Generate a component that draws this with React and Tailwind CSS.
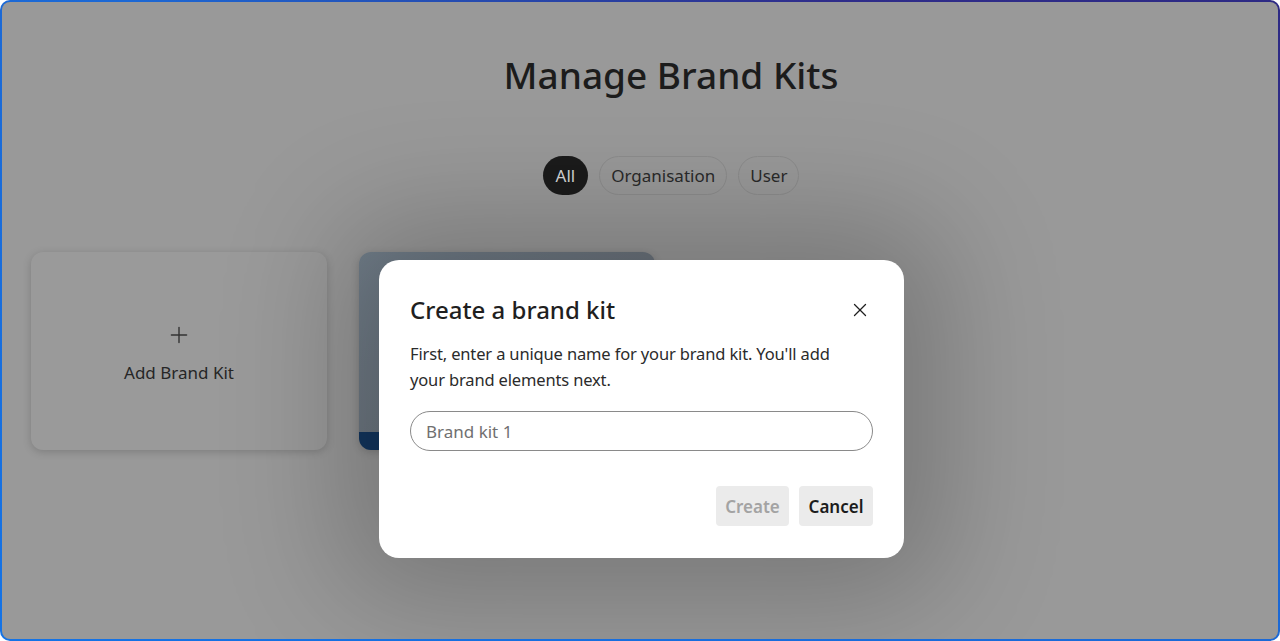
import { X, Plus } from 'lucide-react'

const font = { fontFamily: '"Segoe UI", "Noto Sans", "Open Sans", sans-serif' }

function Chip({ label, active }) {
  return (
    <button
      className={
        active
          ? 'h-[39px] px-[13px] rounded-full bg-[#1b1b1b] text-[#d6d6d6] text-[17px]'
          : 'h-[39px] px-[11px] rounded-full border border-[#8c8c8c] text-[#2a2a2a] text-[17px]'
      }
    >
      {label}
    </button>
  )
}

export default function App() {
  return (
    <div className="w-[1280px] h-[641px] bg-white overflow-hidden" style={font}>
      <div className="relative h-full rounded-[10px] p-[2px] bg-[linear-gradient(to_bottom_left,#2d2a84_0%,#2f2d8a_18%,#1c68d4_45%,#1473e6_100%)]">
        <div className="relative h-full rounded-[8px] bg-[#999999] overflow-hidden">
          {/* page under the dialog */}
          <div className="flex flex-col items-center pt-[48px] pl-[62px]">
            <h1 className="text-[37px] leading-[50px] font-medium text-[#1c1c1c]">
              Manage Brand Kits
            </h1>
            <div className="flex gap-[11px] mt-[56px]">
              <Chip label="All" active />
              <Chip label="Organisation" />
              <Chip label="User" />
            </div>
          </div>

          <div className="flex gap-[32px] pl-[29px] mt-[57px]">
            <div className="w-[296px] h-[198px] pt-[5px] rounded-[12px] bg-[#9a9a9a] shadow-[0_2px_8px_rgba(0,0,0,0.18)] flex flex-col items-center justify-center">
              <Plus className="w-[26px] h-[26px] text-[#333]" strokeWidth={1.3} />
              <span className="mt-[12px] text-[17px] text-[#262626]">Add Brand Kit</span>
            </div>
            <div className="w-[296px] h-[198px] rounded-[12px] overflow-hidden flex flex-col bg-[linear-gradient(135deg,#727f8b,#6b737c_60%,#5e636a)] shadow-[0_2px_8px_rgba(0,0,0,0.18)]">
              <div className="flex-1" />
              <div className="h-[18px] bg-[#12365f]" />
            </div>
          </div>

          {/* dialog */}
          <div className="absolute inset-0 flex justify-center items-start pt-[258px] pl-[3px]">
            <div className="w-[525px] rounded-[20px] bg-white px-[31px] pt-[32px] pb-[32px] shadow-[0_0_120px_40px_rgba(0,0,0,0.22)]">
              <div className="flex items-center justify-between">
                <h2 className="text-[24px] leading-[36px] font-medium text-[#1f1f1f]">Create a brand kit</h2>
                <button className="mr-[2px] text-[#1f1f1f]">
                  <X className="w-[22px] h-[22px]" strokeWidth={1.4} />
                </button>
              </div>
              <p className="mt-[13px] max-w-[440px] text-[16.5px] leading-[26px] tracking-[-0.15px] text-[#2b2b2b]">
                First, enter a unique name for your brand kit. You'll add your brand elements next.
              </p>
              <input
                className="mt-[18px] w-full h-[40px] rounded-full border border-[#8a8a8a] px-[15px] text-[17px] outline-none placeholder:text-[#707070]"
                placeholder="Brand kit 1"
                style={font}
              />
              <div className="flex justify-end gap-[10px] mt-[35px]">
                <button className="h-[40px] w-[73px] pt-[1px] rounded-[4px] bg-[#ebebeb] text-[17px] font-semibold text-[#a3a3a3]">
                  Create
                </button>
                <button className="h-[40px] w-[74px] pt-[1px] rounded-[4px] bg-[#ebebeb] text-[17px] font-semibold text-[#1c1c1c]">
                  Cancel
                </button>
              </div>
            </div>
          </div>
        </div>
      </div>
    </div>
  )
}
